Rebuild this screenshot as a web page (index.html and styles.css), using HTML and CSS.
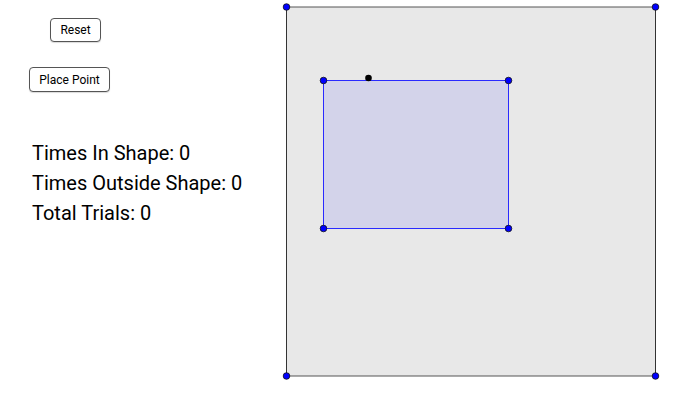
FILE: index.html
```html
<!DOCTYPE html>
<html>
<head>
<meta charset="utf-8">
<link rel="stylesheet" href="styles.css">
</head>
<body>
<div class="app">
  <div class="panel">
    <button class="btn btn-reset">Reset</button>
    <button class="btn btn-place">Place Point</button>
    <div class="stats">
      <div class="stat">Times In Shape: 0</div>
      <div class="stat">Times Outside Shape: 0</div>
      <div class="stat">Total Trials: 0</div>
    </div>
  </div>
  <svg class="canvas" width="420" height="400" viewBox="280 0 420 400" xmlns="http://www.w3.org/2000/svg">
    <rect x="286.5" y="7" width="369" height="369" fill="#e8e8e8" stroke="none"/>
    <line x1="286" y1="7" x2="655" y2="7" stroke="#555" stroke-width="1"/>
    <line x1="286" y1="376" x2="655" y2="376" stroke="#555" stroke-width="1"/>
    <line x1="286.5" y1="7" x2="286.5" y2="376" stroke="#333" stroke-width="1"/>
    <line x1="655.5" y1="7" x2="655.5" y2="376" stroke="#333" stroke-width="1"/>
    <rect x="323.5" y="80.5" width="185" height="148" fill="#d3d3ea" stroke="#2a2aff" stroke-width="1"/>
    <g fill="#0000ff" stroke="#111" stroke-width="0.8">
      <circle cx="286.5" cy="7" r="3.3"/>
      <circle cx="655.5" cy="7" r="3.3"/>
      <circle cx="286.5" cy="376" r="3.3"/>
      <circle cx="655.5" cy="376" r="3.3"/>
      <circle cx="323.5" cy="80.5" r="3.3"/>
      <circle cx="508.5" cy="80.5" r="3.3"/>
      <circle cx="323.5" cy="228.5" r="3.3"/>
      <circle cx="508.5" cy="228.5" r="3.3"/>
    </g>
    <circle cx="368.5" cy="78" r="3.3" fill="#000"/>
  </svg>
</div>
</body>
</html>
```
FILE: styles.css
```css
html, body {
  margin: 0;
  padding: 0;
  background: #fff;
}
.app {
  display: flex;
  width: 700px;
  height: 400px;
  overflow: hidden;
}
.panel {
  width: 280px;
  flex: none;
  display: flex;
  flex-direction: column;
  align-items: flex-start;
  font-family: Roboto, "Liberation Sans", sans-serif;
}
.btn {
  font-family: Roboto, "Liberation Sans", sans-serif;
  font-size: 12px;
  color: #000;
  background: #fff;
  border: 1px solid #555;
  border-radius: 4px;
  padding: 0;
  box-sizing: border-box;
  box-shadow: 0 1px 1px rgba(0,0,0,0.15);
}
.btn-reset {
  margin-left: 50px;
  margin-top: 18px;
  width: 51px;
  height: 24px;
}
.btn-place {
  margin-left: 29px;
  margin-top: 25px;
  width: 81px;
  height: 25px;
}
.stats {
  margin-left: 32px;
  margin-top: 46px;
}
.stat {
  font-size: 20px;
  line-height: 30px;
  color: #000;
}
.canvas {
  display: block;
  flex: none;
}
```
